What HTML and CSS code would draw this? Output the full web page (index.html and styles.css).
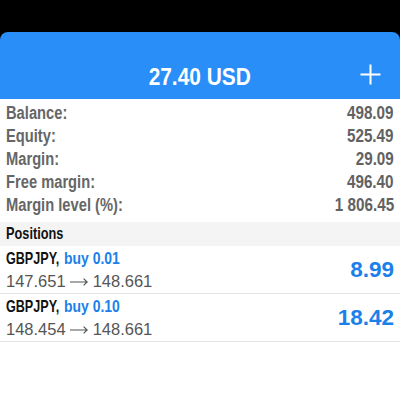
FILE: index.html
```html
<!DOCTYPE html>
<html>
<head>
<meta charset="utf-8">
<link rel="stylesheet" href="styles.css">
</head>
<body>
<div class="screen">
  <div class="statusbar"></div>
  <header class="nav">
    <div class="nav-row">
      <span></span>
      <h1 class="title"><span class="cond-title">27.40 USD</span></h1>
      <button class="add" aria-label="Add">
        <svg width="21" height="21" viewBox="0 0 21 21"><path d="M10.5 0.5V20.5M0.5 10.5H20.5" stroke="#fff" stroke-width="2" fill="none"/></svg>
      </button>
    </div>
  </header>
  <section class="summary">
    <div class="row"><span class="label">Balance:</span><span class="value">498.09</span></div>
    <div class="row"><span class="label">Equity:</span><span class="value">525.49</span></div>
    <div class="row"><span class="label">Margin:</span><span class="value">29.09</span></div>
    <div class="row"><span class="label">Free margin:</span><span class="value">496.40</span></div>
    <div class="row"><span class="label">Margin level (%):</span><span class="value">1 806.45</span></div>
  </section>
  <div class="section-head"><span class="section-title">Positions</span></div>
  <ul class="positions">
    <li class="pos">
      <div class="pos-info">
        <div class="pos-title"><span class="symbol">GBPJPY,</span><span class="side">buy 0.01</span></div>
        <div class="pos-prices"><span>147.651</span><svg class="arrow" width="18" height="8" viewBox="0 0 18 8"><path d="M0 4H17M13.6 0.6L17.2 4L13.6 7.4" stroke="#555" stroke-width="1.2" fill="none"/></svg><span>148.661</span></div>
      </div>
      <div class="profit">8.99</div>
    </li>
    <li class="pos">
      <div class="pos-info">
        <div class="pos-title"><span class="symbol">GBPJPY,</span><span class="side">buy 0.10</span></div>
        <div class="pos-prices"><span>148.454</span><svg class="arrow" width="18" height="8" viewBox="0 0 18 8"><path d="M0 4H17M13.6 0.6L17.2 4L13.6 7.4" stroke="#555" stroke-width="1.2" fill="none"/></svg><span>148.661</span></div>
      </div>
      <div class="profit">18.42</div>
    </li>
  </ul>
</div>
</body>
</html>
```
FILE: styles.css
```css
* { box-sizing: border-box; }
html, body { margin: 0; padding: 0; background: #fff; }
body { font-family: "Liberation Sans", Arial, sans-serif; width: 400px; height: 400px; overflow: hidden; }

.statusbar { height: 32px; background: #000; }
.nav { background: #000; }
.nav-row {
  background: #2a8ef8;
  border-radius: 8px 8px 0 0;
  height: 67px;
  padding-top: 23px;
  display: grid;
  grid-template-columns: 1fr auto 1fr;
  align-items: center;
}
.title { margin: 0; font-size: 24px; font-weight: bold; color: #fff; line-height: 44px; }
.cond-title { display: inline-block; transform: scaleX(0.87); }
.add {
  justify-self: end;
  margin: 0 19px 5px 0;
  padding: 0; border: 0; background: none;
  width: 21px; height: 21px; display: block;
}
.add svg { display: block; }

.summary { padding-top: 3px; }
.row {
  display: flex; justify-content: space-between;
  height: 23px; line-height: 23px;
  padding: 0 6px;
  font-size: 17.5px; font-weight: bold; color: #666;
}
.label { display: inline-block; transform: scaleX(0.84); transform-origin: left center; white-space: nowrap; }
.value { display: inline-block; transform: scaleX(0.87); transform-origin: right center; white-space: nowrap; color: #626262; }

.section-head {
  margin-top: 5px;
  background: #f4f4f4;
  height: 24px; line-height: 24px;
  padding: 0 6px;
  font-size: 17px; font-weight: bold; color: #111;
}
.section-title { display: inline-block; transform: scaleX(0.75); transform-origin: left center; }

.positions { list-style: none; margin: 0; padding: 0; }
.pos {
  display: flex; justify-content: space-between; align-items: center;
  padding: 1px 6px 1px;
  border-bottom: 1px solid #e3e3e3;
}
.pos-title { display: flex; height: 23px; line-height: 23px; font-size: 17px; font-weight: bold; white-space: nowrap; }
.symbol { display: inline-block; width: 58px; color: #111; transform: scaleX(0.74); transform-origin: left center; }
.side { display: inline-block; color: #1c80ea; transform: scaleX(0.82); transform-origin: left center; }
.pos-prices { display: flex; align-items: center; height: 22px; line-height: 22px; font-size: 16.5px; color: #555; white-space: nowrap; }
.arrow { display: block; margin: 1px 5px 0 4px; }
.profit { font-size: 22.5px; font-weight: bold; color: #1c80ea; line-height: 26px; }
```
